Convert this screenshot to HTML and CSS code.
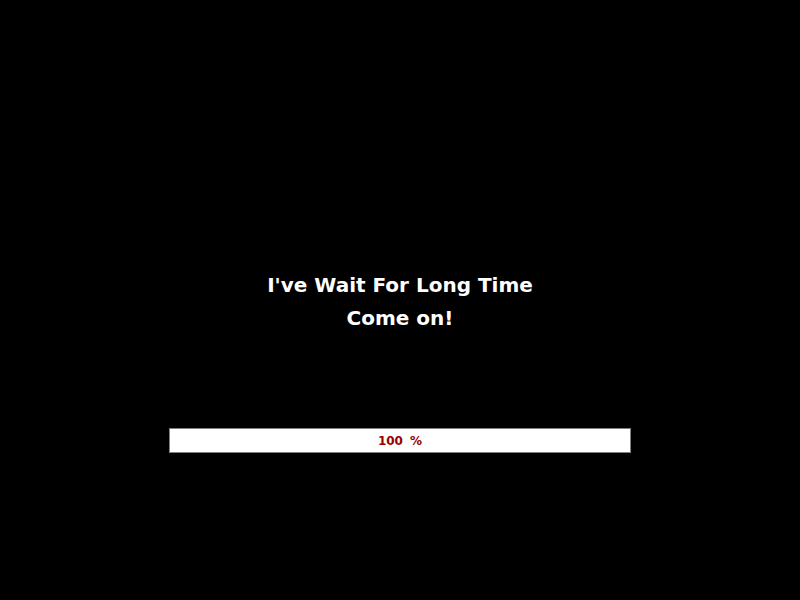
FILE: index.html
```html
<!DOCTYPE html>
<html>
<head>
<meta charset="utf-8">
<link rel="stylesheet" href="styles.css">
</head>
<body>
<div class="screen">
  <div class="message">
    <div class="line">I've Wait For Long Time</div>
    <div class="line">Come on!</div>
  </div>
  <div class="bar"><span class="pct">100 %</span></div>
</div>
</body>
</html>
```
FILE: styles.css
```css
html, body {
  margin: 0;
  padding: 0;
  background: #000;
}
.screen {
  width: 800px;
  height: 600px;
  display: flex;
  flex-direction: column;
  align-items: center;
  font-family: "Comic Sans MS", "DejaVu Sans", sans-serif;
}
.message {
  margin-top: 269px;
  color: #fff;
  font-weight: bold;
  font-size: 20px;
  line-height: 33px;
  text-align: center;
}
.bar {
  margin-top: 93px;
  width: 460px;
  height: 23px;
  background: #fff;
  border: 1px solid #808080;
  display: flex;
  align-items: center;
  justify-content: center;
}
.pct {
  color: #990000;
  font-weight: bold;
  font-size: 12px;
  word-spacing: 3px;
}
```
